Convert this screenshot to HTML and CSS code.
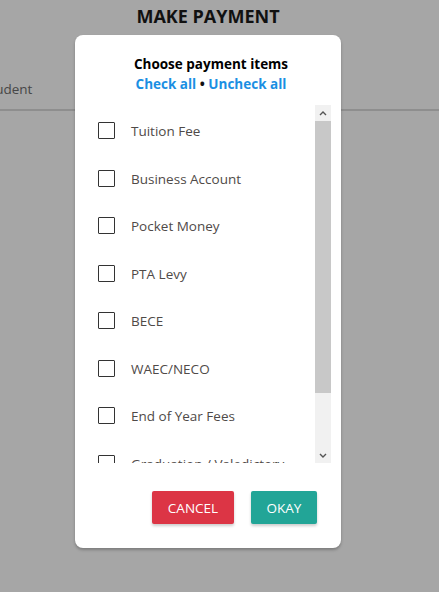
FILE: index.html
```html
<!DOCTYPE html>
<html lang="en">
<head>
    <meta charset="UTF-8">
    <meta name="viewport" content="width=device-width, initial-scale=1.0">
    <title>Make Payment</title>
    <link rel="stylesheet" href="styles.css">
</head>
<body>
    <div class="page">
        <h1 class="page-title">MAKE PAYMENT</h1>
        <div class="tabs">
            <span class="tab">Student</span>
        </div>
    </div>

    <div class="modal">
        <div class="modal-head">
            <div class="modal-title">Choose payment items</div>
            <div class="modal-links">
                <a href="#" class="link">Check all</a> &bull; <a href="#" class="link">Uncheck all</a>
            </div>
        </div>

        <div class="list-wrap">
            <ul class="item-list">
                <li class="item"><span class="box"></span><span class="item-name">Tuition Fee</span></li>
                <li class="item"><span class="box"></span><span class="item-name">Business Account</span></li>
                <li class="item"><span class="box"></span><span class="item-name">Pocket Money</span></li>
                <li class="item"><span class="box"></span><span class="item-name">PTA Levy</span></li>
                <li class="item"><span class="box"></span><span class="item-name">BECE</span></li>
                <li class="item"><span class="box"></span><span class="item-name">WAEC/NECO</span></li>
                <li class="item"><span class="box"></span><span class="item-name">End of Year Fees</span></li>
                <li class="item"><span class="box"></span><span class="item-name">Graduation / Valedictory</span></li>
            </ul>
            <div class="scrollbar">
                <div class="scroll-btn">
                    <svg width="8" height="5" viewBox="0 0 8 5"><path d="M1 4 L4 1 L7 4" fill="none" stroke="#555" stroke-width="1.4"/></svg>
                </div>
                <div class="scroll-thumb"></div>
                <div class="scroll-track"></div>
                <div class="scroll-btn">
                    <svg width="8" height="5" viewBox="0 0 8 5"><path d="M1 1 L4 4 L7 1" fill="none" stroke="#555" stroke-width="1.4"/></svg>
                </div>
            </div>
        </div>

        <div class="modal-actions">
            <button class="btn btn-cancel">Cancel</button>
            <button class="btn btn-okay">Okay</button>
        </div>
    </div>
</body>
</html>
```

FILE: styles.css
```css
body {
    margin: 0;
    padding: 0;
    width: 439px;
    height: 592px;
    overflow: hidden;
    background-color: #a6a6a6;
    font-family: "Open Sans", Arial, sans-serif;
}

.page {
    height: 0;
}

.page-title {
    margin: 0;
    padding-top: 4px;
    padding-right: 23px;
    text-align: center;
    font-size: 18px;
    font-weight: 700;
    line-height: 24px;
    color: #111;
}

.tabs {
    margin-top: 49px;
    border-bottom: 2px solid #8e8e8e;
    height: 32px;
}

.tab {
    display: inline-block;
    margin-left: -17px;
    font-size: 13.5px;
    line-height: 24px;
    color: #474747;
}

.modal {
    position: absolute;
    left: 75px;
    top: 35px;
    width: 266px;
    height: 513px;
    box-sizing: border-box;
    background-color: white;
    border-radius: 8px;
    box-shadow: 0 2px 3px rgba(0, 0, 0, 0.25);
    padding: 19px 10px 24px 15px;
    display: flex;
    flex-direction: column;
}

.modal-head {
    text-align: center;
    padding-left: 1px;
}

.modal-title {
    font-size: 13.5px;
    font-weight: 700;
    line-height: 20px;
    color: #000;
}

.modal-links {
    font-size: 13.5px;
    font-weight: 700;
    line-height: 21px;
    color: #111;
}

.link {
    color: #1a8fe3;
    text-decoration: none;
}

.list-wrap {
    margin-top: 10px;
    height: 358px;
    display: flex;
}

.item-list {
    flex: 1;
    list-style: none;
    margin: 0;
    padding: 2px 0 0 8px;
    overflow: hidden;
}

.item {
    height: 47.5px;
    display: flex;
    align-items: center;
}

.box {
    width: 15px;
    height: 15px;
    border: 1px solid #333;
    border-radius: 1px;
    flex-shrink: 0;
}

.item-name {
    margin-left: 16px;
    padding-top: 1px;
    font-size: 13.5px;
    color: #4f4a48;
}

.scrollbar {
    width: 16px;
    display: flex;
    flex-direction: column;
    background-color: #f1f1f1;
}

.scroll-btn {
    height: 16px;
    display: flex;
    align-items: center;
    justify-content: center;
}

.scroll-thumb {
    height: 272px;
    background-color: #c8c8c8;
}

.scroll-track {
    flex: 1;
}

.modal-actions {
    margin-top: auto;
    display: flex;
    justify-content: flex-end;
    gap: 17px;
    padding-right: 14px;
}

.btn {
    height: 33px;
    border: none;
    border-radius: 2px;
    color: white;
    font-family: "Open Sans", Arial, sans-serif;
    font-size: 13.5px;
    text-transform: uppercase;
    box-shadow: 0 2px 3px rgba(0, 0, 0, 0.2);
    cursor: pointer;
}

.btn-cancel {
    width: 82px;
    background-color: #dc3545;
}

.btn-okay {
    width: 66px;
    background-color: #22a597;
}
```
